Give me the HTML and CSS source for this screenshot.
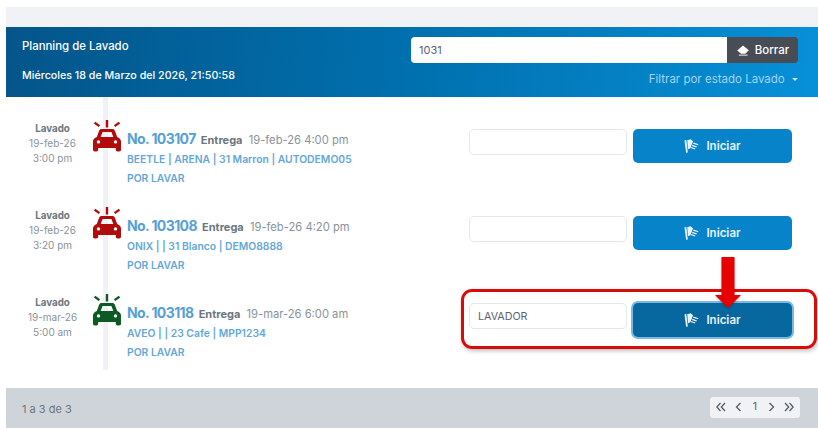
FILE: index.html
```html
<!DOCTYPE html>
<html lang="es">
<head>
<meta charset="utf-8">
<title>Planning de Lavado</title>
<link rel="stylesheet" href="styles.css">
</head>
<body>
<svg class="defs" width="0" height="0" aria-hidden="true">
  <symbol id="car" viewBox="0 0 28 32">
    <path d="M12.800 0h2.400v7.500h-2.400zM.8 3.600l1.500-1.800 4.800 3.400-1.400 1.800zM27.200 3.600l-1.500-1.800-4.800 3.400 1.400 1.800z"/>
    <path fill-rule="evenodd" d="M8.600 9h10.800c1.100 0 2 .6 2.400 1.600l2.400 6.300c2.100.8 3.800 2.300 3.800 4.600v8.300c0 1-.8 1.700-1.800 1.700h-1.600c-1 0-1.800-.7-1.800-1.700v-1.900H5.200v1.900c0 1-.8 1.700-1.800 1.700H1.800c-1 0-1.800-.7-1.800-1.700v-8.300c0-2.300 1.700-3.800 3.800-4.600l2.400-6.300C6.600 9.600 7.500 9 8.600 9zM9.600 11.900l-1.900 5.100h12.600l-1.900-5.100zM5.500 20.200a1.700 1.700 0 1 0 0 3.400 1.700 1.700 0 0 0 0-3.400zM22.500 20.200a1.700 1.700 0 1 0 0 3.400 1.700 1.700 0 0 0 0-3.400z"/>
  </symbol>
  <symbol id="flag" viewBox="0 0 15 14">
    <path d="M.5 1.500 2.200.8 3.800 13.400l-1.700.4z"/>
    <path d="M3.200 1.200 6.600.2 9 2.300 6.400 9.300l-2.400.9z"/>
    <path d="M9.600 3.600 14.600 5.200l-.7 1L9 4.700zM8.500 5.800l4.500 1.600-.7 1-4.400-1.500zM7.400 8l4 1.600-.7 1-3.900-1.500z"/>
  </symbol>
  <symbol id="left" viewBox="0 0 8 10"><path d="M5.500 1 1.500 5l4 4"/></symbol>
  <symbol id="right" viewBox="0 0 8 10"><path d="M2.500 1l4 4-4 4"/></symbol>
  <symbol id="dleft" viewBox="0 0 10 10"><path d="M4.500 1 .8 5l3.700 4M9 1 5.300 5 9 9"/></symbol>
  <symbol id="dright" viewBox="0 0 10 10"><path d="M1 1l3.700 4L1 9M5.500 1l3.700 4-3.700 4"/></symbol>
</svg>
<div class="page">
  <div class="strip"></div>
  <header class="head">
    <div class="head-left">
      <div class="head-title">Planning de Lavado</div>
      <div class="head-date">Miércoles 18 de Marzo del 2026, 21:50:58</div>
    </div>
    <div class="head-right">
      <div class="search">
        <input class="search-input" value="1031">
        <button class="clear">
          <svg class="eraser" viewBox="0 0 13 11"><path d="M6.500 0 12.800 5.200 9 9H4.500L.2 5.500z"/><path d="M2 10h9.500v1H2z"/></svg>
          Borrar
        </button>
      </div>
      <div class="filter">Filtrar por estado Lavado <span class="caret"></span></div>
    </div>
  </header>
  <main class="list">
    <div class="rail"></div>
    <article class="row">
      <div class="when"><b>Lavado</b><span>19-feb-26</span><span>3:00 pm</span></div>
      <svg class="car red"><use href="#car"/></svg>
      <div class="info">
        <div class="title"><strong>No. 103107</strong> <b>Entrega</b> <span>19-feb-26 4:00 pm</span></div>
        <div class="sub">BEETLE | ARENA | 31 Marron | AUTODEMO05</div>
        <div class="sub status">POR LAVAR</div>
      </div>
      <input class="worker">
      <button class="start"><svg class="flag"><use href="#flag"/></svg>Iniciar</button>
    </article>
    <article class="row">
      <div class="when"><b>Lavado</b><span>19-feb-26</span><span>3:20 pm</span></div>
      <svg class="car red"><use href="#car"/></svg>
      <div class="info">
        <div class="title"><strong>No. 103108</strong> <b>Entrega</b> <span>19-feb-26 4:20 pm</span></div>
        <div class="sub">ONIX | | 31 Blanco | DEMO8888</div>
        <div class="sub status">POR LAVAR</div>
      </div>
      <input class="worker">
      <button class="start"><svg class="flag"><use href="#flag"/></svg>Iniciar</button>
    </article>
    <article class="row">
      <div class="when"><b>Lavado</b><span>19-mar-26</span><span>5:00 am</span></div>
      <svg class="car green"><use href="#car"/></svg>
      <div class="info">
        <div class="title"><strong>No. 103118</strong> <b>Entrega</b> <span>19-mar-26 6:00 am</span></div>
        <div class="sub">AVEO | | 23 Cafe | MPP1234</div>
        <div class="sub status">POR LAVAR</div>
      </div>
      <input class="worker" value="LAVADOR">
      <button class="start active"><svg class="flag"><use href="#flag"/></svg>Iniciar</button>
    </article>
    <div class="callout"></div>
    <svg class="arrow" viewBox="0 0 26 51"><path d="M6.500 0h13v38H26L13 51 0 38h6.500z"/></svg>
  </main>
  <footer class="foot">
    <span class="foot-count">1 a 3 de 3</span>
    <nav class="pager">
      <svg class="chev wide"><use href="#dleft"/></svg>
      <svg class="chev"><use href="#left"/></svg>
      <span class="num">1</span>
      <svg class="chev"><use href="#right"/></svg>
      <svg class="chev wide"><use href="#dright"/></svg>
    </nav>
  </footer>
</div>
</body>
</html>
```
FILE: styles.css
```css
* { box-sizing: border-box; }
html, body { margin: 0; background: #fff; }
body { font-family: Inter, "Open Sans", sans-serif; color: #6c757d; overflow: hidden; height: 430px; }
.defs { position: absolute; }
.page { margin: 7px 0 0 6px; width: 812px; }
.strip { height: 20px; background: #f0f2f5; }
.head {
  height: 70px;
  background: linear-gradient(95deg, #04558a 0%, #0070ae 50%, #0790d8 100%);
  display: flex;
  justify-content: space-between;
  color: #fff;
}
.head-left {
  padding: 12px 0 0 16px;
  font-weight: 500;
  display: flex;
  flex-direction: column;
  gap: 16px;
  line-height: 14px;
}
.head-title { font-size: 11.400px; }
.head-date { font-size: 10.700px; }
.head-right { width: 387px; margin-right: 20px; padding-top: 10px; }
.search { display: flex; height: 26px; }
.search-input {
  flex: 1;
  min-width: 0;
  border: 0;
  border-radius: 4px 0 0 4px;
  padding: 0 8px;
  font: 400 11px Inter, sans-serif;
  color: #5a6270;
  background: #fff;
}
.clear {
  width: 71px;
  border: 0;
  border-radius: 0 4px 4px 0;
  background: #474c55;
  color: #fff;
  font: 500 11.500px Inter, sans-serif;
  display: flex;
  align-items: center;
  justify-content: center;
  gap: 6px;
  padding: 0 0 0 1px;
}
.eraser { width: 12px; height: 11px; fill: #fff; }
.filter {
  margin-top: 9px;
  text-align: right;
  font-size: 11.500px;
  color: #a4d4f0;
  line-height: 14px;
}
.caret {
  display: inline-block;
  margin-left: 4px;
  vertical-align: 2px;
  border: 3px solid transparent;
  border-top-color: #cfe6f5;
  border-bottom: 0;
}
.list { position: relative; height: 291px; padding-top: 1px; }
.rail { position: absolute; left: 97px; top: 0; width: 5px; height: 273px; background: #f0f2f5; }
.row { position: relative; display: flex; height: 87px; padding-top: 21px; }
.when {
  width: 87px;
  padding: 2px 0 0 6px;
  display: flex;
  flex-direction: column;
  align-items: center;
  font-size: 10px;
  line-height: 15px;
  color: #8a929a;
}
.when b { color: #6c757d; font-weight: 700; font-size: 9.800px; }
.car { width: 28px; height: 32px; flex: none; position: relative; margin-top: 1px; }
.red { fill: #b10c0c; }
.green { fill: #0c5a24; }
.info { width: 342px; padding: 11px 0 0 6px; }
.title { font-size: 11.200px; line-height: 18px; white-space: nowrap; color: #8a929a; }
.title strong { font-size: 14px; letter-spacing: -.6px; color: #56a0d3; font-weight: 700; margin-right: 2px; }
.title b { color: #6c757d; font-weight: 700; font-size: 11px; margin-right: 3px; }
.sub { font-size: 10.350px; font-weight: 600; color: #63a7d8; line-height: 14px; margin-top: 3px; white-space: nowrap; }
.status { margin-top: 5px; }
.worker {
  width: 158px;
  height: 26px;
  margin: 10px 0 0 6px;
  border: 1px solid #e4e7eb;
  border-radius: 5px;
  padding: 0 8px;
  background: #fff;
  font: 400 10.700px Inter, sans-serif;
  color: #5a6270;
}
.start {
  width: 159px;
  height: 34px;
  margin: 10px 0 0 6px;
  border: 0;
  border-radius: 5px;
  background: #0783c9;
  color: #e8f4fb;
  font: 600 11.500px Inter, sans-serif;
  display: flex;
  align-items: center;
  justify-content: center;
  gap: 7px;
  padding: 0;
}
.start.active { background: #07679f; box-shadow: 0 0 0 2px #7db8e0; }
.flag { width: 15px; height: 14px; fill: #e8f4fb; }
.callout {
  position: absolute;
  left: 455px;
  top: 192px;
  width: 356px;
  height: 60px;
  border: 3px solid #d80a0a;
  border-radius: 11px;
  box-shadow: 1px 2px 4px rgba(0,0,0,.25);
  pointer-events: none;
}
.arrow {
  position: absolute;
  left: 709px;
  top: 160px;
  width: 26px;
  height: 51px;
  fill: #e60000;
  filter: drop-shadow(0 1px 1px rgba(0,0,0,.3));
}
.foot {
  height: 40px;
  background: #cfd4db;
  display: flex;
  align-items: center;
  justify-content: space-between;
  padding: 0 18px 2px 16px;
  font-size: 11px;
}
.foot-count { padding-top: 4px; }
.pager {
  width: 90px;
  height: 21px;
  background: #f0f2f5;
  border-radius: 3px;
  display: flex;
  align-items: center;
  justify-content: space-between;
  padding: 0 6px;
  color: #555c66;
  line-height: 1;
}
.chev { width: 8px; height: 10px; fill: none; stroke: #555c66; stroke-width: 1.300; }
.chev.wide { width: 10px; }
.num { font-size: 10.500px; color: #555c66; }
```
